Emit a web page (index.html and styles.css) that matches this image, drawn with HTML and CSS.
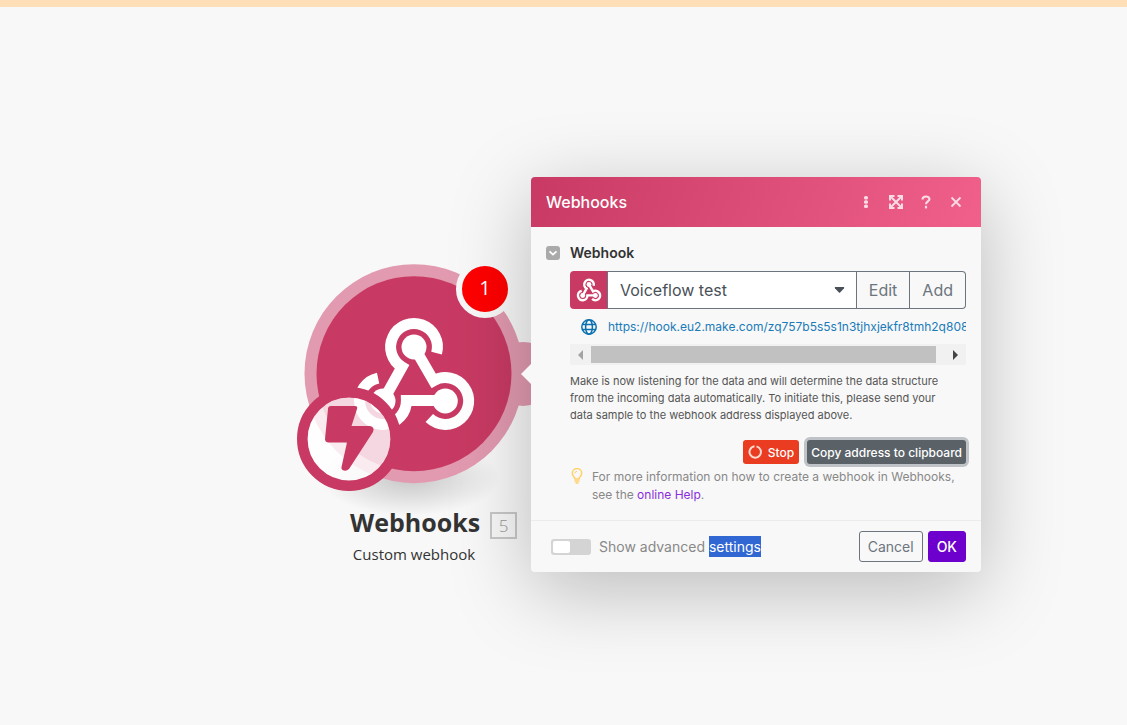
FILE: index.html
```html
<!DOCTYPE html>
<html lang="en">

<head>
    <meta charset="UTF-8">
    <meta name="viewport" content="width=device-width, initial-scale=1.0">
    <title>Webhooks</title>
    <link rel="stylesheet" href="styles.css">
</head>

<body>
    <div class="top-strip"></div>

    <main class="canvas">
        <section class="node">
            <svg class="node-art" viewBox="290 255 260 245" aria-hidden="true">
                <!-- output port -->
                <circle cx="523" cy="374" r="32" fill="#e29ab0" />
                <circle cx="414" cy="373.7" r="109.5" fill="#e29ab0" />
                <circle cx="414" cy="373.7" r="97.5" fill="#c83a63" />
                <g fill="none" stroke="#fff" stroke-width="11">
                    <path d="M436.6 353.1A23.4 23.4 0 1 0 402 367L383 401" />
                    <path d="M414 347L433.6 380.7A23.4 23.4 0 1 1 429.3 418.1" />
                    <path d="M445 400.5H406.4A23.4 23.4 0 1 1 378.1 378.1" />
                </g>
                <g fill="#fff">
                    <circle cx="414" cy="347" r="12.5" />
                    <circle cx="445.3" cy="401" r="12.5" />
                    <circle cx="383" cy="401" r="12.5" />
                </g>
                <!-- trigger badge -->
                <circle cx="349" cy="439" r="42" fill="#fff" fill-opacity="0.8" />
                <circle cx="349" cy="439" r="46.7" fill="none" stroke="#c83a63" stroke-width="10.6" />
                <path d="M331 406H355Q358 406 357 409L351.500 426H370Q375 427 373 432L349 469Q346 472 342.500 470Q341 469 341.500 467L347 442.500H328Q325 442 325 439L328 409Q328 406 331 406Z" fill="#c83a63" />
            </svg>
            <span class="node-count">1</span>
            <div class="node-title">
                <h1>Webhooks</h1>
                <span class="node-id">5</span>
            </div>
            <p class="node-subtitle">Custom webhook</p>
        </section>

        <form class="panel">
            <header class="panel-header">
                <h2>Webhooks</h2>
                <button type="button" class="icon-button" aria-label="More">
                    <svg width="14" height="14" viewBox="0 0 14 14" fill="currentColor"><rect x="5" y="1" width="4" height="3.400" rx="1.500" /><rect x="5" y="5.300" width="4" height="3.400" rx="1.500" /><rect x="5" y="9.600" width="4" height="3.400" rx="1.500" /></svg>
                </button>
                <button type="button" class="icon-button" aria-label="Expand">
                    <svg width="14" height="14" viewBox="0 0 14 14" fill="none" stroke="currentColor" stroke-width="2"><path d="M2 2L12 12M12 2L2 12" /><path d="M5.500 1H1V5.500M8.500 1H13V5.500M13 8.500V13H8.500M1 8.500V13H5.500" /></svg>
                </button>
                <button type="button" class="icon-button" aria-label="Help">
                    <svg width="14" height="14" viewBox="0 0 14 14" fill="none" stroke="currentColor" stroke-width="2.200"><path d="M3.500 4.500C3.700 .5 10.400 .6 10.400 4.200C10.400 6.500 7 6.300 7 9.300" /><path d="M7 10.800V13.400" /></svg>
                </button>
                <button type="button" class="icon-button" aria-label="Close">
                    <svg width="14" height="14" viewBox="0 0 14 14" fill="none" stroke="currentColor" stroke-width="1.800"><path d="M2.500 2.500L11.500 11.500M11.500 2.500L2.500 11.500" /></svg>
                </button>
            </header>

            <div class="panel-body">
                <div class="field-label">
                    <button type="button" class="collapse" aria-label="Collapse">
                        <svg width="14" height="14" viewBox="0 0 14 14" fill="none" stroke="#fff" stroke-width="1.800"><path d="M3.500 5.300L7 8.600L10.500 5.300" /></svg>
                    </button>
                    <label for="webhook">Webhook</label>
                </div>

                <div class="field">
                    <div class="picker">
                        <span class="picker-icon">
                            <svg width="26" height="26" viewBox="350 312 128 124" aria-hidden="true">
                                <g fill="none" stroke="#fff" stroke-width="12">
                                    <path d="M436.6 353.1A23.4 23.4 0 1 0 402 367L383 401" />
                                    <path d="M414 347L433.6 380.7A23.4 23.4 0 1 1 429.3 418.1" />
                                    <path d="M445 400.5H406.4A23.4 23.4 0 1 1 378.1 378.1" />
                                </g>
                                <g fill="#fff">
                                    <circle cx="414" cy="347" r="12" />
                                    <circle cx="445.3" cy="401" r="12" />
                                    <circle cx="383" cy="401" r="12" />
                                </g>
                            </svg>
                        </span>
                        <div class="select-wrap">
                            <select id="webhook">
                                <option>Voiceflow test</option>
                            </select>
                            <svg class="caret" width="11" height="6" viewBox="0 0 12 7"><path d="M1 0H11Q12 .5 11.300 1.500L6.700 6.500Q6 7 5.300 6.500L.7 1.500Q0 .5 1 0Z" fill="#495057" /></svg>
                        </div>
                        <button type="button">Edit</button>
                        <button type="button">Add</button>
                    </div>

                    <div class="address">
                        <svg width="16" height="16" viewBox="0 0 16 16" fill="none" stroke="#0b72b0" stroke-width="1.500"><circle cx="8" cy="8" r="7.200" /><ellipse cx="8" cy="8" rx="3.400" ry="7.200" /><path d="M1 5.500H15M1 10.500H15" /></svg>
                        <a href="#">https://hook.eu2.make.com/zq757b5s5s1n3tjhxjekfr8tmh2q808</a>
                    </div>

                    <div class="scrollbar">
                        <button type="button" aria-label="Scroll left"><svg width="5" height="10" viewBox="0 0 5 10"><path d="M5 0V10L0 5Z" fill="#a3a3a3" /></svg></button>
                        <div class="scroll-thumb"></div>
                        <button type="button" aria-label="Scroll right"><svg width="5" height="10" viewBox="0 0 5 10"><path d="M0 0V10L5 5Z" fill="#444" /></svg></button>
                    </div>

                    <p class="hint">Make is now listening for the data and will determine the data structure from the incoming data automatically. To initiate this, please send your data sample to the webhook address displayed above.</p>

                    <div class="actions">
                        <button type="button" class="stop">
                            <svg width="14" height="14" viewBox="0 0 14 14" fill="none" stroke="#ffd9d0" stroke-width="2"><path d="M8.500 1.400A5.700 5.700 0 1 1 6.500 1.300" /></svg>
                            Stop
                        </button>
                        <button type="button" class="copy">Copy address to clipboard</button>
                    </div>

                    <div class="info">
                        <svg width="14" height="16" viewBox="0 0 14 16" fill="none" stroke="#ffd166" stroke-width="1.500"><path d="M5 11C5 9 2.300 8.300 2.300 5.300A4.700 4.700 0 0 1 11.700 5.300C11.700 8.300 9 9 9 11Z" /><path d="M4.800 5.500Q5 3.400 7 3.300" stroke-width="1" /><path d="M4.500 13H9.500M5.500 15H8.500" /></svg>
                        <p>For more information on how to create a webhook in Webhooks, see the <a href="#">online Help</a>.</p>
                    </div>
                </div>
            </div>

            <footer class="panel-footer">
                <label class="advanced">
                    <input type="checkbox">
                    <span>Show advanced <mark>settings</mark></span>
                </label>
                <button type="button" class="cancel">Cancel</button>
                <button type="submit" class="ok">OK</button>
            </footer>
        </form>
    </main>
</body>
</html>
```

FILE: styles.css
```css
* {
    box-sizing: border-box;
}

body {
    margin: 0;
    min-height: 100vh;
    display: flex;
    flex-direction: column;
    background-color: #f8f8f8;
    font-family: Inter, sans-serif;
    color: #333;
}

h1, h2, p {
    margin: 0;
}

button, select {
    font: inherit;
    cursor: pointer;
}

.top-strip {
    height: 7px;
    background-color: #ffdfb8;
}

.canvas {
    position: relative;
    flex: 1;
    overflow: hidden;
}

/* Scenario node */
.node {
    position: absolute;
    left: 290px;
    top: 248px;
    width: 260px;
    font-family: "Open Sans", sans-serif;
}

/* soft shadow under the node */
.node::before {
    content: "";
    position: absolute;
    left: 30px;
    top: 185px;
    width: 180px;
    height: 76px;
    background: radial-gradient(closest-side, rgba(0, 0, 0, 0.2), rgba(0, 0, 0, 0.1) 50%, transparent);
}

.node-art {
    position: relative;
    display: block;
    width: 260px;
    height: 245px;
}

.node-count {
    position: absolute;
    left: 166px;
    top: 5px;
    width: 58px;
    height: 58px;
    border: 6px solid #f8f8f8;
    border-radius: 50%;
    background-color: #f00;
    color: #fff;
    font-size: 20px;
    line-height: 44px;
    text-align: center;
}

.node-title {
    position: relative;
    display: flex;
    align-items: flex-end;
    gap: 10px;
    margin-top: 6px;
    padding-left: 60px;
}

.node-title h1 {
    font-size: 25px;
    line-height: 33px;
}

.node-id {
    width: 27px;
    height: 27px;
    border: 2px solid #c8c8c8;
    color: #999;
    font-size: 17px;
    font-weight: 300;
    line-height: 23px;
    text-align: center;
}

.node-subtitle {
    width: 248px;
    margin-top: 4px;
    font-size: 15px;
    line-height: 22px;
    text-align: center;
}

/* Settings panel */
.panel {
    position: absolute;
    left: 531px;
    top: 170px;
    width: 450px;
    border-radius: 4px;
    background-color: #f8f8f8;
    box-shadow: 0 18px 80px rgba(0, 0, 0, 0.25);
}

.panel::before {
    content: "";
    position: absolute;
    left: -10px;
    top: 187px;
    border: 10px solid transparent;
    border-left-width: 0;
    border-right-color: #f8f8f8;
}

.panel-header {
    display: flex;
    align-items: center;
    gap: 16px;
    height: 50px;
    padding: 0 18px 0 15px;
    border-radius: 4px 4px 0 0;
    background: linear-gradient(110deg, #c83a63, #f0608b);
    color: #fff;
}

.panel-header h2 {
    flex: 1;
    font-size: 16px;
    font-weight: 500;
}

.icon-button {
    display: flex;
    padding: 0;
    border: 0;
    background: none;
    color: #fbdbe5;
}

.panel-body {
    padding: 16px 15px;
}

.field-label {
    display: flex;
    align-items: center;
    gap: 10px;
    font-size: 14px;
    font-weight: 600;
    line-height: 20px;
}

.collapse {
    display: flex;
    padding: 0;
    border: 0;
    border-radius: 3px;
    background-color: #aaa;
}

.field {
    margin: 8px 0 0 24px;
}

.picker {
    display: flex;
    height: 38px;
    font-size: 16px;
}

.picker-icon {
    display: flex;
    align-items: center;
    justify-content: center;
    width: 37px;
    border-radius: 4px 0 0 4px;
    background-color: #c83a63;
}

.select-wrap {
    position: relative;
    flex: 1;
}

.select-wrap select {
    width: 100%;
    height: 38px;
    padding: 0 12px;
    border: 1px solid #6c757d;
    border-radius: 0;
    background-color: #fff;
    color: #495057;
    appearance: none;
}

.caret {
    position: absolute;
    right: 12px;
    top: 16px;
    pointer-events: none;
}

.picker button {
    padding: 0 12px;
    border: 1px solid #6c757d;
    border-left: 0;
    background: none;
    color: #6c757d;
}

.picker button:last-child {
    border-radius: 0 4px 4px 0;
}

.address {
    display: flex;
    align-items: center;
    gap: 11px;
    height: 35px;
    padding-left: 11px;
    overflow: hidden;
}

.address svg {
    flex: none;
}

.address a {
    color: #1a7bb8;
    font-size: 12px;
    white-space: nowrap;
    text-decoration: none;
}

.scrollbar {
    display: flex;
    align-items: center;
    height: 21px;
    background-color: #f1f1f1;
}

.scrollbar button {
    display: flex;
    align-items: center;
    justify-content: center;
    width: 21px;
    height: 21px;
    padding: 0;
    border: 0;
    background: none;
}

.scroll-thumb {
    flex: 1;
    height: 17px;
    margin-right: 9px;
    background-color: #c1c1c1;
}

.hint {
    margin-top: 8px;
    padding-right: 16px;
    color: #555;
    font-size: 11px;
    line-height: 17px;
}

.actions {
    display: flex;
    justify-content: flex-end;
    gap: 8px;
    margin-top: 16px;
}

.actions button {
    display: flex;
    align-items: center;
    gap: 6px;
    height: 24px;
    padding: 0 5px;
    border: 0;
    border-radius: 3px;
    color: #fff;
    font-size: 12px;
    font-weight: 500;
}

.actions .stop {
    background-color: #e93c20;
}

.actions .copy {
    padding: 0 4px;
    background-color: #5a6268;
    box-shadow: 0 0 0 3px #bfc3c8;
}

.info {
    display: flex;
    gap: 8px;
    margin-top: 4px;
    color: #888;
    font-size: 12px;
    line-height: 18px;
}

.info svg {
    flex: none;
}

.info a {
    color: #8a2fdc;
    text-decoration: none;
}

.panel-footer {
    display: flex;
    align-items: center;
    gap: 5px;
    height: 52px;
    padding: 0 15px 0 20px;
    border-top: 1px solid #ebebeb;
    font-size: 14px;
}

.advanced {
    flex: 1;
    display: flex;
    align-items: center;
    gap: 8px;
    color: #888;
}

.advanced input {
    appearance: none;
    width: 40px;
    height: 16px;
    margin: 0;
    padding: 2px;
    border-radius: 3px;
    background-color: #d4d4d4;
}

.advanced input::before {
    content: "";
    display: block;
    width: 17px;
    height: 12px;
    border-radius: 2px;
    background-color: #fff;
}

.advanced input:checked::before {
    margin-left: auto;
}

.advanced mark {
    display: inline-block;
    background-color: #3067d3;
    color: #fff;
    line-height: 21px;
}

.panel-footer button {
    height: 31px;
    padding: 0 8px;
    border: 1px solid #6c757d;
    border-radius: 3px;
    background: none;
    color: #6c757d;
}

.panel-footer .ok {
    border-color: #6d00cc;
    background-color: #6d00cc;
    color: #fff;
    font-weight: 500;
}
```
